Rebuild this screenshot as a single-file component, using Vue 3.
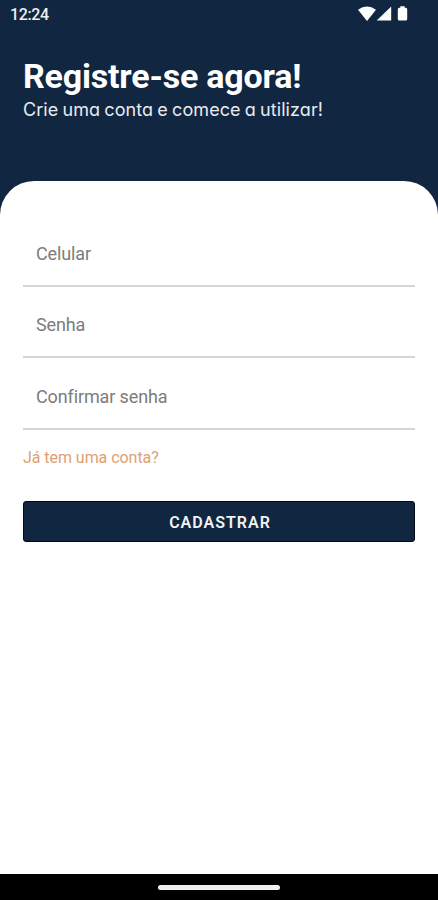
<script setup>
import { ref } from 'vue'

const fields = ref([
  { id: 'celular', label: 'Celular', type: 'tel', value: '' },
  { id: 'senha', label: 'Senha', type: 'password', value: '' },
  { id: 'confirmar', label: 'Confirmar senha', type: 'password', value: '' },
])
</script>

<template>
  <div class="screen">
    <div class="status">
      <span class="time">12:24</span>
      <svg class="status-icons" width="52" height="16" viewBox="0 0 52 16" fill="#fff">
        <path d="M0 3.8Q9 -2.6 18 3.8L9 15Z" />
        <path d="M33.2 0.6V14.6H18.7Z" />
        <path d="M42.3 0.2h4.4v1.6h1q1.5 0 1.5 1.5v9.8q0 1.5-1.5 1.5h-6.4q-1.5 0-1.5-1.5V3.3q0-1.5 1.5-1.5h1Z" />
      </svg>
    </div>
    <header class="header">
      <h1 class="title">Registre-se agora!</h1>
      <p class="subtitle">Crie uma conta e comece a utilizar!</p>
    </header>
    <main class="sheet">
      <form class="form" @submit.prevent>
        <input
          v-for="field in fields"
          :id="field.id"
          :key="field.id"
          v-model="field.value"
          class="field"
          :type="field.type"
          :placeholder="field.label"
          :aria-label="field.label"
        />
        <a class="login">Já tem uma conta?</a>
        <button class="submit" type="submit">CADASTRAR</button>
      </form>
    </main>
    <footer class="navbar"><span class="handle"></span></footer>
  </div>
</template>

<style>
body {
  margin: 0;
}
</style>

<style scoped>
.screen {
  display: flex;
  flex-direction: column;
  width: 438px;
  height: 900px;
  overflow: hidden;
  background: #112641;
  font-family: Roboto, sans-serif;
}

.status {
  display: flex;
  flex: none;
  justify-content: space-between;
  box-sizing: border-box;
  height: 30px;
  padding: 6px 28px 0 10px;
}

.time {
  color: #eef0ec;
  font-size: 16px;
  font-weight: 500;
  line-height: 18px;
  letter-spacing: -0.4px;
}

.header {
  flex: none;
  box-sizing: border-box;
  height: 151px;
  padding: 25px 23px 0;
  white-space: nowrap;
}

.title {
  margin: 0;
  color: #fff;
  font-size: 34px;
  font-weight: 700;
  line-height: 42px;
  letter-spacing: -0.2px;
}

.subtitle {
  margin: 1px 0 0;
  color: #e8ebef;
  font-family: Inter, sans-serif;
  font-feature-settings: 'cv11';
  font-size: 18px;
  line-height: 24px;
  letter-spacing: 0.08px;
  word-spacing: -1px;
}

.sheet {
  flex: 1;
  box-sizing: border-box;
  padding: 42px 23px 0;
  border-radius: 34px 34px 0 0;
  background: #fff;
}

.form {
  display: flex;
  flex-direction: column;
}

.field {
  box-sizing: border-box;
  width: 100%;
  height: 63.6px;
  margin: 0 0 8px;
  padding: 0 13px 1px;
  border: 0;
  border-bottom: 2px solid #d5d5d5;
  outline: 0;
  background: transparent;
  color: #333;
  font-family: inherit;
  font-size: 18px;
  letter-spacing: -0.12px;
}

.field::placeholder {
  color: #7c7c7c;
  opacity: 1;
}

.login {
  margin-top: 10px;
  align-self: flex-start;
  color: #dda174;
  font-size: 16px;
  line-height: 20px;
  letter-spacing: -0.05px;
}

.submit {
  box-sizing: border-box;
  height: 41px;
  margin: 33px 0 0;
  padding: 2px 0 0 2px;
  border: 1px solid #030914;
  border-radius: 3px;
  background: #112641;
  color: #f2f2f2;
  font-family: inherit;
  font-size: 16px;
  font-weight: 600;
  letter-spacing: 1px;
}

.navbar {
  display: flex;
  flex: none;
  align-items: center;
  justify-content: center;
  height: 26px;
  background: #000;
}

.handle {
  width: 122px;
  height: 5px;
  border-radius: 3px;
  background: #f0f0f0;
}
</style>
